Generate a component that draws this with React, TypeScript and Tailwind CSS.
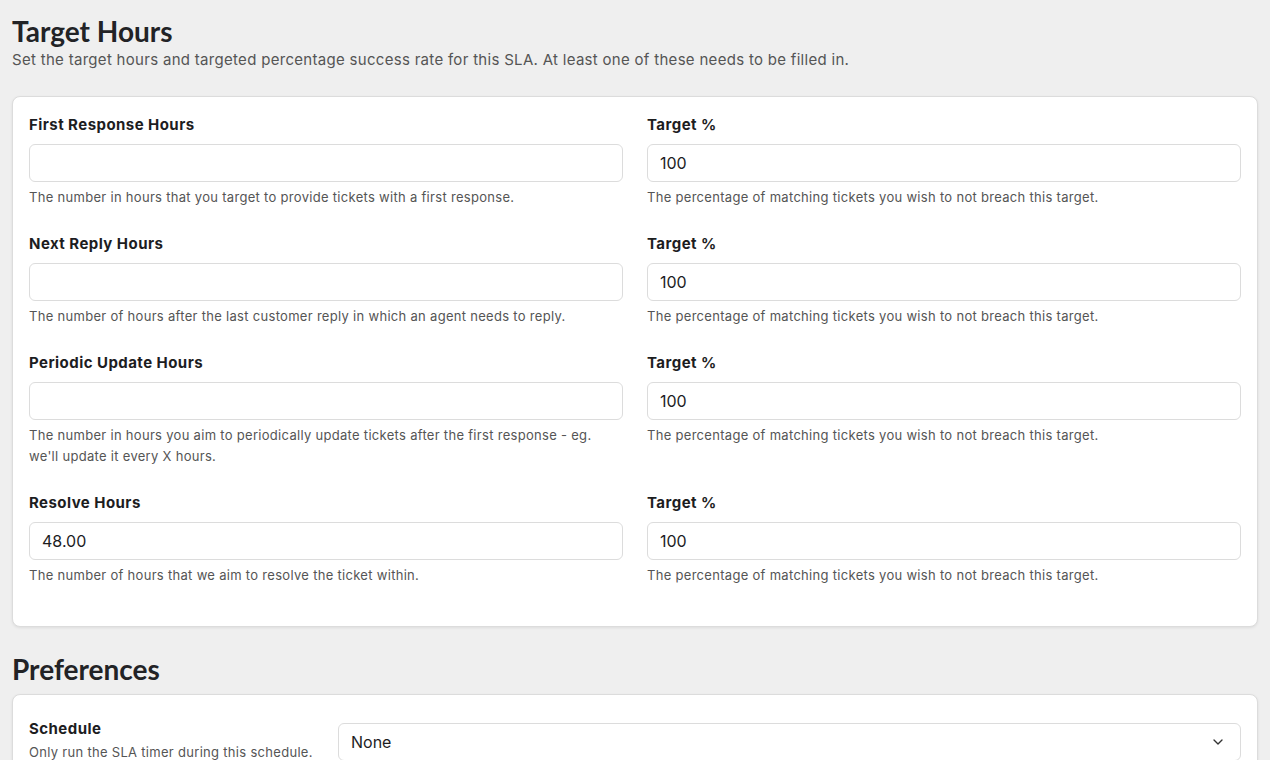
import { ChevronDown } from 'lucide-react';

const HELP_TARGET = 'The percentage of matching tickets you wish to not breach this target.';

type Row = {
  label: string;
  value: string;
  help: string;
};

const rows: Row[] = [
  {
    label: 'First Response Hours',
    value: '',
    help: 'The number in hours that you target to provide tickets with a first response.',
  },
  {
    label: 'Next Reply Hours',
    value: '',
    help: 'The number of hours after the last customer reply in which an agent needs to reply.',
  },
  {
    label: 'Periodic Update Hours',
    value: '',
    help: "The number in hours you aim to periodically update tickets after the first response - eg. we'll update it every X hours.",
  },
  {
    label: 'Resolve Hours',
    value: '48.00',
    help: 'The number of hours that we aim to resolve the ticket within.',
  },
];

function Field({ label, value, help }: Row) {
  return (
    <div className="mb-[25px]">
      <label className="block text-[15px] leading-[22px] font-bold tracking-[0.03em] text-[#1d1d1f]">{label}</label>
      <input
        type="text"
        defaultValue={value}
        className="mt-[8px] block h-[38px] w-full rounded-[6px] border border-[#dcdcdc] bg-white px-3 text-[16px] text-[#1d1d1f] outline-none"
      />
      <p className="mt-[5px] text-[13px] leading-[21px] tracking-[0.023em] text-[#555]">{help}</p>
    </div>
  );
}

export default function App() {
  return (
    <div
      className="min-h-screen bg-[#efefef] px-3 pt-[14px] pb-6"
      style={{ fontFamily: 'Inter, "Noto Sans", sans-serif' }}
    >
      <h1
        className="text-[28px] leading-[34px] font-bold text-[#222326]"
        style={{ fontFamily: 'Lato, Inter, sans-serif' }}
      >
        Target Hours
      </h1>
      <p className="mt-[1px] text-[15px] leading-[22px] tracking-[0.02em] text-[#555]">
        Set the target hours and targeted percentage success rate for this SLA. At least one of these needs to be filled in.
      </p>

      <div className="mt-[25px] rounded-[8px] border border-[#dcdcdc] bg-white px-4 pt-[17px] pb-[15px] shadow-[0_1px_3px_rgba(0,0,0,0.08)]">
        {rows.map((row) => (
          <div key={row.label} className="grid grid-cols-2 gap-x-6">
            <Field {...row} />
            <Field label="Target %" value="100" help={HELP_TARGET} />
          </div>
        ))}
      </div>

      <h2
        className="mt-[25px] text-[28px] leading-[34px] font-bold text-[#222326]"
        style={{ fontFamily: 'Lato, Inter, sans-serif' }}
      >
        Preferences
      </h2>

      <div className="mt-[8px] rounded-[8px] border border-[#dcdcdc] bg-white px-4 pt-[23px] pb-6 shadow-[0_1px_3px_rgba(0,0,0,0.08)]">
        <div className="flex items-start gap-6">
          <div className="w-[285px] shrink-0">
            <div className="text-[15px] leading-[22px] font-bold tracking-[0.03em] text-[#1d1d1f]">Schedule</div>
            <p className="mt-[2px] text-[13px] leading-[21px] tracking-[0.023em] text-[#555]">Only run the SLA timer during this schedule.</p>
          </div>
          <div className="mt-[5px] flex h-[38px] flex-1 items-center justify-between rounded-[6px] border border-[#dcdcdc] bg-white pl-3 pr-[14px]">
            <span className="text-[16px] text-[#1d1d1f]">None</span>
            <ChevronDown className="h-4 w-4 text-[#333]" strokeWidth={2} />
          </div>
        </div>
      </div>
    </div>
  );
}
